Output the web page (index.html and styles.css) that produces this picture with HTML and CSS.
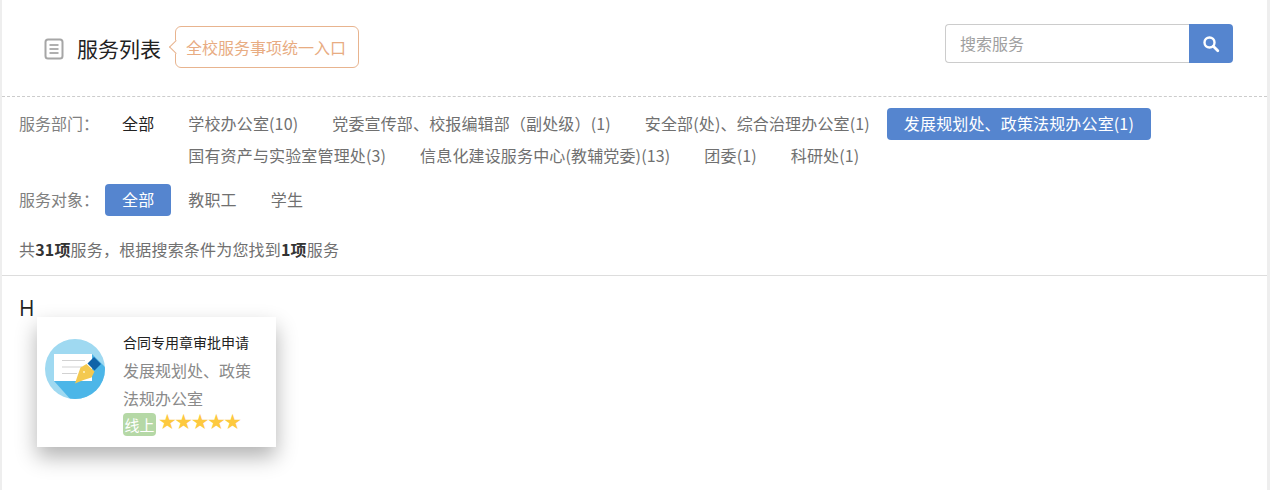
FILE: index.html
```html
<!DOCTYPE html>
<html lang="zh-CN">
<head>
  <meta charset="UTF-8" />
  <title>服务列表</title>
  <link rel="stylesheet" href="styles.css">
</head>
<body>
<div class="page">
  <div class="header">
    <div class="title-wrap">
      <svg class="list-icon" width="20" height="22" viewBox="0 0 20 22">
        <rect x="1.500" y="1.500" width="17" height="19" rx="2.500" fill="#fff" stroke="#a6a6a6" stroke-width="2"/>
        <path d="M5.500 7h9M5.500 11h9M5.500 15h9" stroke="#b0b0b0" stroke-width="2"/>
      </svg>
      <h1>服务列表</h1>
      <div class="callout">全校服务事项统一入口</div>
    </div>
    <div class="search">
      <input type="text" placeholder="搜索服务" />
      <button aria-label="搜索">
        <svg width="18" height="18" viewBox="0 0 18 18">
          <circle cx="7.500" cy="7.500" r="5" fill="none" stroke="#fff" stroke-width="2.400"/>
          <path d="M11.300 11.300l4.500 4.500" stroke="#fff" stroke-width="2.800" stroke-linecap="round"/>
        </svg>
      </button>
    </div>
  </div>

  <div class="filters">
    <div class="filter-row">
      <div class="filter-label">服务部门：</div>
      <a class="filter-link plain">全部</a>
      <div class="filter-items">
        <a class="filter-link">学校办公室(10)</a>
        <a class="filter-link">党委宣传部、校报编辑部（副处级）(1)</a>
        <a class="filter-link">安全部(处)、综合治理办公室(1)</a>
        <a class="filter-link active">发展规划处、政策法规办公室(1)</a>
        <a class="filter-link">国有资产与实验室管理处(3)</a>
        <a class="filter-link">信息化建设服务中心(教辅党委)(13)</a>
        <a class="filter-link">团委(1)</a>
        <a class="filter-link">科研处(1)</a>
      </div>
    </div>
    <div class="filter-row">
      <div class="filter-label">服务对象：</div>
      <a class="filter-link active">全部</a>
      <div class="filter-items">
        <a class="filter-link">教职工</a>
        <a class="filter-link">学生</a>
      </div>
    </div>
    <div class="summary">共<b>31项</b>服务，根据搜索条件为您找到<b>1项</b>服务</div>
  </div>

  <div class="results">
    <div class="letter">H</div>
    <div class="card">
      <svg class="card-icon" width="60" height="60" viewBox="0 0 60 60">
        <defs><clipPath id="round"><circle cx="30" cy="30" r="30"/></clipPath></defs>
        <circle cx="30" cy="30" r="30" fill="#9fd9f1"/>
        <path d="M9 42L47 15 62 30V62H27z" fill="#4cb6e8" clip-path="url(#round)"/>
        <rect x="9" y="15" width="38" height="27" fill="#fff"/>
        <path d="M17 21.500h23M17 28h20M17 34.500h15" stroke="#d2d2d2" stroke-width="1.200"/>
        <path d="M49 18l7 7-6.500 6.500-7-7z" fill="#0f63a8"/>
        <path d="M41.500 25l8 7.500-3 6-8 2.500-8.500 3.500 3-9 2.500-7z" fill="#f4c94f"/>
        <circle cx="39" cy="33" r="1" fill="#fff3c4"/>
      </svg>
      <div class="card-body">
        <div class="card-title">合同专用章审批申请</div>
        <div class="card-dept">发展规划处、政策法规办公室</div>
        <div class="card-meta"><span class="badge">线上</span><span class="stars">★★★★★</span></div>
      </div>
    </div>
  </div>
</div>
</body>
</html>
```
FILE: styles.css
```css
* { box-sizing: border-box; }

html, body {
  height: 100%;
}

body {
  margin: 0;
  background: #eee;
  color: #707070;
  font-family: "Noto Sans CJK SC", "Open Sans", sans-serif;
  font-size: 16px;
  overflow: hidden;
}

.page {
  margin: 0 3px 0 2px;
  height: 490px;
  background: #fff;
}

.header {
  height: 97px;
  padding: 24px 34px 0 42px;
  display: flex;
  justify-content: space-between;
  align-items: flex-start;
  border-bottom: 1px dashed #ccc;
}

.title-wrap {
  display: flex;
  align-items: center;
  margin-top: 2px;
}

.list-icon {
  margin-right: 13px;
  margin-top: 3px;
}

h1 {
  margin: 0;
  font-size: 21px;
  font-weight: 400;
  color: #222;
  position: relative;
  top: 1px;
}

.callout {
  position: relative;
  margin-left: 14px;
  width: 184px;
  height: 42px;
  padding-right: 2px;
  line-height: 40px;
  text-align: center;
  color: #e8ac82;
  border: 1px solid #e8b48f;
  border-radius: 6px;
}

.callout::before {
  content: "";
  position: absolute;
  left: -5px;
  top: 15px;
  width: 9px;
  height: 9px;
  background: #fff;
  border-left: 1px solid #e8b48f;
  border-bottom: 1px solid #e8b48f;
  transform: rotate(45deg);
}

.search {
  display: flex;
}

.search input {
  width: 244px;
  height: 39px;
  padding: 0 14px 2px;
  font: inherit;
  color: #555;
  border: 1px solid #ccc;
  border-right: none;
  border-radius: 4px 0 0 4px;
  outline: none;
}

.search input::placeholder {
  color: #a0a0a0;
}

.search button {
  width: 44px;
  height: 39px;
  padding: 0;
  display: flex;
  align-items: center;
  justify-content: center;
  background: #5585cf;
  border: none;
  border-radius: 0 4px 4px 0;
}

.filters {
  padding: 11px 17px 0;
  height: 179px;
  border-bottom: 1px solid #ddd;
}

.filter-row {
  display: flex;
  align-items: flex-start;
  margin-bottom: 12px;
}

.filter-label {
  flex: none;
  width: 86px;
  line-height: 31px;
  color: #808080;
}

.filter-items {
  flex: 1;
  display: flex;
  flex-wrap: wrap;
}

.filter-link {
  flex: none;
  padding: 0 17px;
  height: 32px;
  line-height: 31px;
  letter-spacing: 0.15px;
  color: #707070;
  border-radius: 4px;
}

.filter-link.plain {
  color: #222;
}

.filter-link.active {
  background: #5585cf;
  color: #fff;
}

.summary {
  margin-top: 22px;
  line-height: 23px;
  letter-spacing: 0.18px;
}

.summary b {
  color: #333;
}

.results {
  padding: 18px 17px 0;
}

.letter {
  font-size: 21px;
  line-height: 28px;
  color: #222;
  font-family: "Open Sans", sans-serif;
}

.card {
  display: flex;
  width: 239px;
  height: 130px;
  margin: -5px 0 0 18px;
  padding: 11px 8px;
  background: #fff;
  box-shadow: 0 10px 20px rgba(0, 0, 0, 0.3);
}

.card-icon {
  flex: none;
  margin: 11px 18px 0 0;
}

.card-body {
  width: 135px;
}

.card-title {
  font-size: 14px;
  line-height: 28px;
  color: #222;
}

.card-dept {
  line-height: 28px;
  color: #8a8a8a;
}

.card-meta {
  display: flex;
  align-items: flex-start;
  margin-top: 1px;
}

.badge {
  width: 33px;
  height: 23px;
  line-height: 24px;
  text-align: center;
  font-size: 15px;
  color: #fff;
  background: #b5d8a6;
  border-radius: 4px;
}

.stars {
  margin-left: 2px;
  font-family: "DejaVu Sans", sans-serif;
  font-size: 21px;
  line-height: 18px;
  color: #fdc93f;
  letter-spacing: -2.500px;
}
```
